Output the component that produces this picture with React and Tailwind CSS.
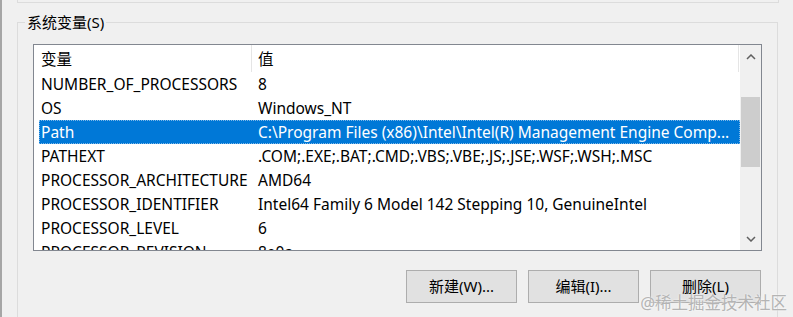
import React from "react";

const rows = [
  ["NUMBER_OF_PROCESSORS", "8"],
  ["OS", "Windows_NT"],
  ["Path", "C:\\Program Files (x86)\\Intel\\Intel(R) Management Engine Comp...", true],
  ["PATHEXT", ".COM;.EXE;.BAT;.CMD;.VBS;.VBE;.JS;.JSE;.WSF;.WSH;.MSC"],
  ["PROCESSOR_ARCHITECTURE", "AMD64"],
  ["PROCESSOR_IDENTIFIER", "Intel64 Family 6 Model 142 Stepping 10, GenuineIntel"],
  ["PROCESSOR_LEVEL", "6"],
  ["PROCESSOR_REVISION", "8e0a"],
];

function Chevron({ down }) {
  return (
    <svg width="10" height="6" viewBox="0 0 10 6" fill="none">
      <path
        d={down ? "M1 1l4 4 4-4" : "M1 5l4-4 4 4"}
        stroke="#606060"
        strokeWidth="1.5"
      />
    </svg>
  );
}

function App() {
  return (
    <div className="relative w-[793px] h-[317px] overflow-hidden bg-[#f0f0f0] border-l-2 border-[#a6a6a6] font-['Noto_Sans','Noto_Sans_CJK_SC',sans-serif] text-[15px] text-black">
      {/* bottom edge of the group above */}
      <div className="ml-[15px] w-[762px] h-[3px] border-x border-b border-[#dcdcdc]" />

      <fieldset className="ml-[15px] mt-[9px] w-[761px] h-[400px] border border-[#dcdcdc] p-0">
        <legend className="ml-[7px] px-[2px] leading-[20px]">系统变量(S)</legend>

        <div className="px-[15px] pt-[12px]">
          {/* list view */}
          <div className="flex h-[207px] border border-[#828790] bg-white text-[15.5px]">
            <div className="flex-1 min-w-0 overflow-hidden">
              <div className="flex h-[27px]">
                <div className="w-[218px] pl-[7px] pt-[2px] flex items-center border-r border-[#e5e5e5]">
                  变量
                </div>
                <div className="flex-1 pl-[6px] pt-[2px] flex items-center border-r border-[#e5e5e5] mr-[1px]">
                  值
                </div>
              </div>

              {rows.map(([name, value, selected]) => (
                <div
                  key={name}
                  className={
                    selected
                      ? "ml-[5px] h-[24px] pt-[2px] flex items-center whitespace-nowrap bg-[#0078d7] text-white outline-1 outline-dotted outline-offset-[-1px] outline-[#7fb8e8]"
                      : "ml-[5px] h-[24px] pt-[2px] flex items-center whitespace-nowrap"
                  }
                >
                  <div className="w-[212px] shrink-0 pl-[2px]">{name}</div>
                  <div className="pl-[7px]">{value}</div>
                </div>
              ))}
            </div>

            {/* scrollbar */}
            <div className="w-[21px] shrink-0 flex flex-col bg-[#f0f0f0]">
              <div className="h-[24px] flex items-center justify-center">
                <Chevron />
              </div>
              <div className="flex-1 flex justify-center">
                <div className="mt-[28px] w-[19px] h-[70px] bg-[#cdcdcd]" />
              </div>
              <div className="h-[22px] flex items-center justify-center">
                <Chevron down />
              </div>
            </div>
          </div>

          {/* buttons */}
          <div className="mt-[19px] mr-[1px] flex justify-end gap-[11px]">
            {["新建(W)...", "编辑(I)...", "删除(L)"].map((label) => (
              <button
                key={label}
                className="w-[111px] h-[33px] border border-[#adadad] bg-[#e1e1e1] text-[15px] leading-none"
              >
                {label}
              </button>
            ))}
          </div>
        </div>
      </fieldset>

      {/* watermark */}
      <div className="absolute right-[6px] bottom-[4px] text-[16.5px] leading-[20px] text-[#b4b4b4] [text-shadow:0_0_2px_#fff]">
        @稀土掘金技术社区
      </div>
    </div>
  );
}

export default App;
